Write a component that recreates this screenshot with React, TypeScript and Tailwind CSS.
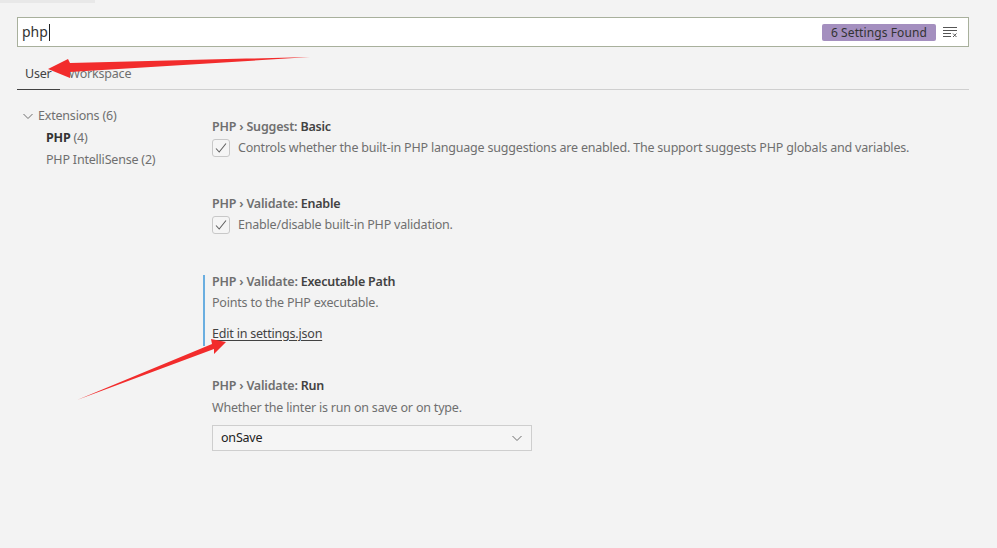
import React from "react";

const Chevron = ({ className = "" }: { className?: string }) => (
  <svg width="12" height="12" viewBox="0 0 12 12" className={className}>
    <path d="M1.5 4 L6 8.5 L10.5 4" fill="none" stroke="#6f6f6f" strokeWidth="1" />
  </svg>
);

const Check = () => (
  <div className="w-[18px] h-[18px] border border-[#c8c8c8] rounded-[3px] bg-[#f5f5f5] flex items-center justify-center">
    <svg width="14" height="14" viewBox="0 0 14 14">
      <path d="M2 7.5 L5.2 11 L12 2.5" fill="none" stroke="#616161" strokeWidth="1.1" />
    </svg>
  </div>
);

const Title = ({ cat, name }: { cat: string; name: string }) => (
  <div className="leading-[14px] text-[12.5px] tracking-[-0.2px] font-semibold text-[#6f6f6f] whitespace-nowrap">
    {cat} <span className="text-[#424242]">{name}</span>
  </div>
);

export default function App() {
  return (
    <div
      className="relative w-[997px] h-[548px] bg-[#f3f3f3] overflow-hidden"
      style={{ fontFamily: '"Noto Sans", "Open Sans", sans-serif' }}
    >
      <div className="w-[95px] h-[3px] bg-[#e8e8e8]" />
      {/* search */}
      <div className="ml-[17px] mt-[14px] w-[952px] h-[30px] bg-white border border-[#a8b09c] flex items-center pl-[4px] pr-[10px]">
        <span className="text-[14px] text-[#333] leading-none">php</span>
        <span className="w-px h-[17px] bg-[#222] ml-[1px]" />
        <div className="flex-1" />
        <div className="h-[17px] px-[9px] rounded-[2px] bg-[#a48fbf] text-[12px] tracking-[0.1px] text-[#333] leading-[17px] whitespace-nowrap">
          6 Settings Found
        </div>
        <svg width="16" height="16" viewBox="0 0 16 16" className="ml-[6px]">
          <g stroke="#555" strokeWidth="1">
            <path d="M1 3.5 H15" />
            <path d="M1 6.5 H15" />
            <path d="M1 9.5 H9" />
            <path d="M1 12.5 H9" />
            <path d="M11 9.5 L14.5 13 M14.5 9.5 L11 13" />
          </g>
        </svg>
      </div>
      {/* tabs */}
      <div className="ml-[17px] w-[952px] mt-[12px] flex border-b border-[#cfcfcf] h-[31px] text-[12.5px] tracking-[-0.2px]">
        <div className="px-[8px] text-[#424242] leading-[30px] border-b border-[#424242] -mb-px h-[31px]">
          User
        </div>
        <div className="pl-[9px] text-[#6f6f6f] leading-[30px]">Workspace</div>
      </div>
      {/* body */}
      <div className="flex text-[12.5px] tracking-[-0.2px]">
        <div className="w-[212px] pt-[15px] pl-[22px]">
          <div className="flex items-center h-[22px] text-[#6f6f6f]">
            <Chevron className="mr-[4px]" />
            Extensions (6)
          </div>
          <div className="h-[22px] pl-[24px] flex items-center text-[#6f6f6f]">
            <span className="font-bold text-[#333]">PHP</span>&nbsp;(4)
          </div>
          <div className="h-[22px] pl-[24px] flex items-center text-[#6f6f6f]">
            PHP IntelliSense (2)
          </div>
        </div>
        <div className="flex-1 pt-[30px]">
          <Title cat="PHP › Suggest:" name="Basic" />
          <div className="mt-[5px] flex items-center">
            <Check />
            <span className="ml-[8px] text-[#6f6f6f] leading-[14px] whitespace-nowrap">
              Controls whether the built-in PHP language suggestions are enabled. The support suggests PHP globals and variables.
            </span>
          </div>
          <div className="mt-[40px]">
            <Title cat="PHP › Validate:" name="Enable" />
          </div>
          <div className="mt-[5px] flex items-center">
            <Check />
            <span className="ml-[8px] text-[#6f6f6f] leading-[14px]">
              Enable/disable built-in PHP validation.
            </span>
          </div>
          <div className="mt-[41px] -ml-[9px] border-l-2 border-[#6aaee0] pl-[7px] pb-[5px]">
            <Title cat="PHP › Validate:" name="Executable Path" />
            <div className="mt-[7px] text-[#6f6f6f] leading-[14px]">Points to the PHP executable.</div>
            <div className="mt-[17px] text-[#424242] leading-[14px] underline underline-offset-2">
              Edit in settings.json
            </div>
          </div>
          <div className="mt-[33px]">
            <Title cat="PHP › Validate:" name="Run" />
          </div>
          <div className="mt-[8px] text-[#6f6f6f] leading-[14px]">
            Whether the linter is run on save or on type.
          </div>
          <div className="mt-[10px] w-[320px] h-[26px] border border-[#cecece] bg-[#f5f5f5] flex items-center pl-[8px] pr-[8px]">
            <span className="text-[#222] flex-1">onSave</span>
            <Chevron />
          </div>
        </div>
      </div>
      {/* red annotation arrows */}
      <svg className="absolute left-0 top-0 pointer-events-none" width="997" height="548">
        <polygon points="310,57 70,63 68,59 48,69 70,78 70,72" fill="#f22c2c" />
        <polygon points="77,400 212,344 211,339 226,342 214,354 214,349" fill="#f22c2c" />
      </svg>
    </div>
  );
}
